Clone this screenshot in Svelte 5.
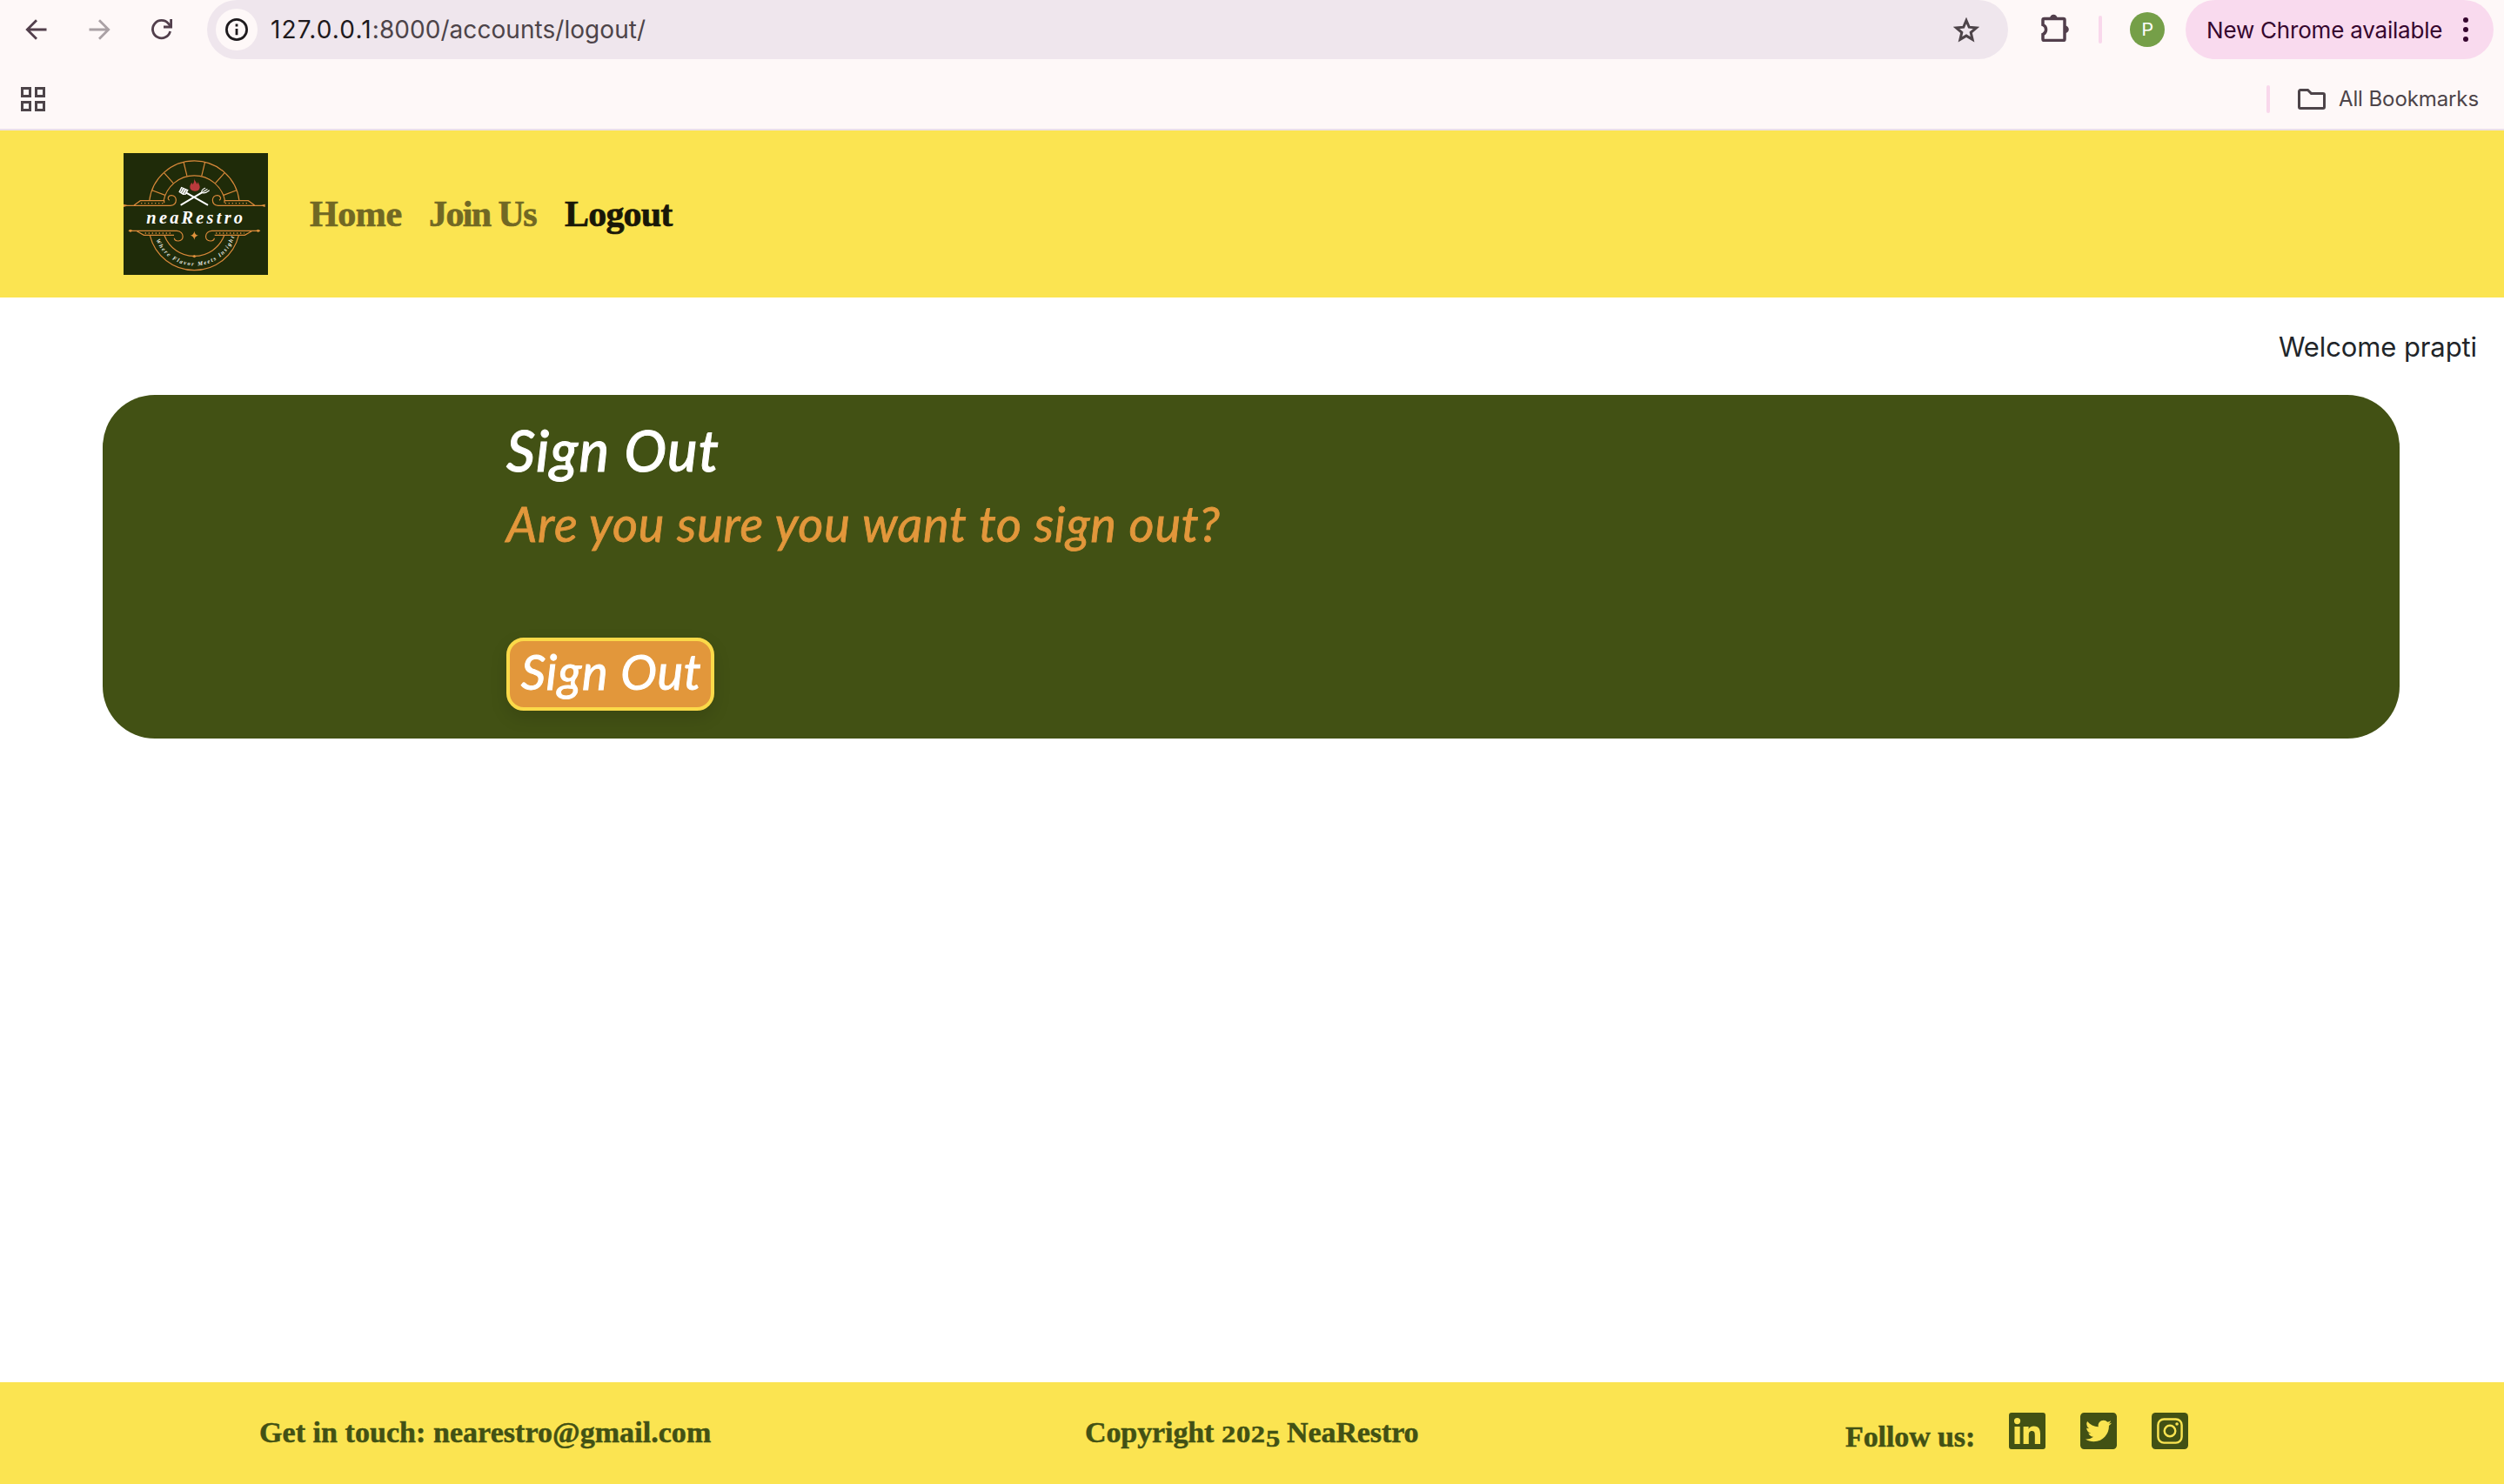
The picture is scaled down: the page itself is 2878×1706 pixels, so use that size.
<script>
  const links = [
    { label: 'Home', cls: 'home' },
    { label: 'Join Us', cls: 'join' },
    { label: 'Logout', cls: 'active' }
  ];
  // Angles of the bricks in the upper arch of the logo
  const bricks = [-69, -42, -13.5, 13.5, 42, 69].map((deg) => {
    const a = (deg * Math.PI) / 180;
    return {
      x1: 310 + 108 * Math.sin(a), y1: 232 - 108 * Math.cos(a),
      x2: 310 + 156 * Math.sin(a), y2: 232 - 156 * Math.cos(a)
    };
  });
</script>

<div class="page">
  <header class="chrome">
    <div class="toolbar">
      <svg class="nav-icon" viewBox="0 0 24 24"><path d="M23.500 12H1.500M12 1.200 1.300 12 12 22.800" /></svg>
      <svg class="nav-icon dim" viewBox="0 0 24 24"><path d="M.5 12h22M12 1.200 22.700 12 12 22.800" /></svg>
      <svg class="nav-icon" viewBox="0 0 24 24"><path d="M21.600 14A10.200 10.200 0 1 1 19.600 5.200L22.300 8.300" /><path d="M22.600 0V9H14" /></svg>
      <div class="omnibox">
        <span class="info">
          <svg viewBox="0 0 26 26"><circle cx="13" cy="13" r="11.600" /><path d="M13 12v7.300M13 6.400v3" /></svg>
        </span>
        <span class="url"><b>127.0.0.1</b>:8000/accounts/logout/</span>
        <svg class="star" viewBox="0 0 30 29"><path d="m15 3.500 3.200 7.700 8.300.7-6.300 5.400 1.900 8.100-7.100-4.300-7.100 4.300 1.900-8.100-6.300-5.400 8.300-.7z" /></svg>
      </div>
      <svg class="puzzle" viewBox="0 0 32 32">
        <path d="M4 5.500h21.500a1.500 1.500 0 0 1 1.500 1.500v22a1.500 1.500 0 0 1-1.500 1.500H3.500a1.500 1.500 0 0 1-1.500-1.500v-5.500a6 6 0 0 0 0-11V7a1.500 1.500 0 0 1 1.500-1.500z" />
        <path class="fill" d="M10 5a4.300 4.300 0 0 1 8.600 0zM27.500 13.500a4.300 4.300 0 0 1 0 8.600z" />
      </svg>
      <i class="sep"></i>
      <span class="avatar">P</span>
      <span class="update">
        New Chrome available
        <svg viewBox="0 0 6 28"><circle cx="3" cy="3" r="3" /><circle cx="3" cy="14" r="3" /><circle cx="3" cy="25" r="3" /></svg>
      </span>
    </div>
    <div class="bookmarks">
      <svg class="apps" viewBox="0 0 28 28"><path d="M1.500 1.500h9v9h-9zM17.500 1.500h9v9h-9zM1.500 17.500h9v9h-9zM17.500 17.500h9v9h-9z" /></svg>
      <span class="grow"></span>
      <i class="sep"></i>
      <svg class="folder" viewBox="0 0 32 24"><path d="M3 1.500h8.500l4 4H29a1.500 1.500 0 0 1 1.500 1.500v14a1.500 1.500 0 0 1-1.500 1.500H3A1.500 1.500 0 0 1 1.500 21V3A1.500 1.500 0 0 1 3 1.500z" /></svg>
      <span class="all">All Bookmarks</span>
    </div>
  </header>

  <nav class="navbar">
    <svg class="logo" viewBox="66 48 498 420">
      <rect class="bg" x="66" y="48" width="498" height="420" />
      <g class="gold">
        <path d="M155 213A156 156 0 0 1 465 213M204 213A108 108 0 0 1 416 213" />
        {#each bricks as b}<line x1={b.x1} y1={b.y1} x2={b.x2} y2={b.y2} />{/each}
        <path d="M157 332A157.500 157.500 0 0 0 463 332M207 332A110 110 0 0 0 413 332" />
        <path d="M68 229H228C254 226 252 193 230 194C219 195 216 206 224 211M102 228L124 212H206V220" />
        <path d="M552 229H392C366 226 368 193 390 194C401 195 404 206 396 211M518 228L496 212H414V220" />
        <path d="M84 316H250C276 318 277 352 254 351C245 350 241 347 241 341M112 317L136 331H240" />
        <path d="M536 316H370C344 318 343 352 366 351C375 350 379 347 379 341M508 317L484 331H380" />
        <path class="dots" d="M126 221H204M416 221H496M140 324H236M384 324H482" />
      </g>
      <path class="gold-fill" d="M66 224l16 5-16 5zM554 224l-16 5 16 5zM82 316l8-5 8 5-8 5zM522 316l8-5 8 5-8 5zM310 317q2 13 14 15q-12 2-14 15q-2-13-14-15q12-2 14-15zM302 404l8-5 8 5-8 5z" />
      <path class="flame" d="M309 134c1 9 8 12 10 21l4-7c2 7 7 13 6 19c-2 9-9 12-17 12c-9 0-17-5-17-13c-1-7 4-12 6-17l3 7c6-7 6-13 5-22z" />
      <g class="tools">
        <path d="M281 184L355 226M336 184L265 226" />
        <path class="thin" d="M336 185C333 176 340 172 347 169M338 185C348 187 354 183 361 177M341 181L354 173" />
        <path class="blade" d="M265 164L290 175L281 191L271 192L256 182z" />
        <path class="slits" d="M268 170l-5 11M275 173l-6 12M282 177l-6 11" />
      </g>
      <text class="brand" x="145" y="292" textLength="332">neaRestro</text>
      <path id="tag-arc" class="none" d="M175 340A144 144 0 0 0 447 340" />
      <text class="tag"><textPath href="#tag-arc" startOffset="8" textLength="350">Where Flavor Meets Insight</textPath></text>
    </svg>
    {#each links as l}<a class={l.cls} href="#top">{l.label}</a>{/each}
  </nav>

  <main>
    <p class="welcome">Welcome prapti</p>
    <section class="card">
      <h1>Sign Out</h1>
      <p>Are you sure you want to sign out?</p>
      <button>Sign Out</button>
    </section>
  </main>

  <footer>
    <span class="touch">Get in touch: nearestro@gmail.com</span>
    <span class="copy">Copyright <span class="old">202</span><span class="old low">5</span> NeaRestro</span>
    <div class="social">
      <span class="follow">Follow us:</span>
      <svg viewBox="0 0 448 448"><path fill-rule="evenodd" d="M416 0H32A32 32 0 0 0 0 32V416A32 32 0 0 0 32 448H416A32 32 0 0 0 448 416V32A32 32 0 0 0 416 0zM135 384H69V170H135zM102 141A38.500 38.500 0 1 1 102 64A38.500 38.500 0 0 1 102 141zM384 384H318V280C318 255 317 223 283 223C248 223 243 250 243 278V384H177V170H241V199H242C251 182 272 165 305 165C372 165 384 209 384 267z" /></svg>
      <svg viewBox="0 32 448 448"><path d="M400 32H48C21.500 32 0 53.500 0 80v352c0 26.500 21.500 48 48 48h352c26.500 0 48-21.500 48-48V80c0-26.500-21.500-48-48-48zm-48.900 158.800c.2 2.800.2 5.700.2 8.500 0 86.700-66 186.600-186.600 186.600-37.200 0-71.700-10.800-100.700-29.400 5.300.6 10.400.8 15.800.8 30.700 0 58.900-10.400 81.400-28-28.800-.6-53-19.500-61.300-45.500 10.100 1.500 19.200 1.500 29.600-1.200-30-6.100-52.500-32.500-52.500-64.400v-.8c8.700 4.900 18.900 7.900 29.600 8.300a65.447 65.447 0 0 1-29.200-54.600c0-12.200 3.200-23.400 8.900-33.100 32.300 39.800 80.800 65.800 135.200 68.600-9.300-44.500 24-80.600 64-80.600 18.900 0 35.900 7.900 47.900 20.700 14.800-2.800 29-8.300 41.600-15.800-4.900 15.200-15.200 28-28.800 36.100 13.200-1.400 26-5.100 37.800-10.200-8.900 13.100-20.100 24.700-32.900 34z" /></svg>
      <svg class="insta" viewBox="0 0 448 448"><rect width="448" height="448" rx="48" /><rect class="line" x="79" y="79" width="290" height="290" rx="72" /><circle class="line" cx="224" cy="224" r="67" /><circle class="dot" cx="310" cy="138" r="19" /></svg>
    </div>
  </footer>
</div>

<style>
  :global(body) { margin: 0; background: #fff; }
  .page { display: flex; flex-direction: column; width: 2878px; height: 1706px; overflow: hidden; font-family: Inter, sans-serif; }
  svg { display: block; flex: none; }
  .grow { flex: 1; }

  .chrome { box-sizing: border-box; height: 150px; background: #fef8f8; border-bottom: 2px solid #ebe0e8; }
  .toolbar { display: flex; align-items: center; height: 68px; padding-left: 30px; }
  .nav-icon { width: 24px; height: 24px; margin-right: 48px; fill: none; stroke: #523f4c; stroke-width: 2.800; overflow: visible; }
  .nav-icon.dim { stroke: #aaa1a5; }
  .nav-icon:nth-child(3) { margin-right: 40px; }
  .omnibox { display: flex; align-items: center; box-sizing: border-box; width: 2070px; height: 68px; padding: 0 33px 0 10px; border-radius: 34px; background: #efe6ed; }
  .info { display: grid; place-items: center; width: 48px; height: 48px; border-radius: 50%; background: #fef8f8; }
  .info svg { width: 26px; height: 26px; fill: none; stroke: #1e1a1d; stroke-width: 2.800; }
  .url { flex: 1; margin-left: 15px; font-size: 28px; letter-spacing: .05px; color: #4d4449; }
  .url b { font-weight: 400; letter-spacing: 1.150px; color: #1e1a1d; }
  .star { width: 30px; height: 29px; fill: none; stroke: #4d4449; stroke-width: 3; }
  .puzzle { width: 32px; height: 32px; margin: -4px 34px 0 38px; fill: none; stroke: #523f4c; stroke-width: 3.500; }
  .puzzle .fill { fill: #523f4c; stroke: none; }
  .sep { flex: none; width: 4px; height: 32px; border-radius: 2px; background: #f9d8ec; }
  .avatar { display: grid; place-items: center; width: 40px; height: 40px; margin: 0 24px 0 32px; border-radius: 50%; background: #759f48; color: #fff; font: 21px Roboto, sans-serif; }
  .update { display: flex; align-items: center; justify-content: space-between; box-sizing: border-box; width: 354px; height: 68px; padding: 0 29px 0 24px; border-radius: 34px; background: #f9daee; color: #36072f; font-size: 26px; letter-spacing: -.2px; white-space: nowrap; }
  .update svg { width: 6px; height: 28px; fill: #36072f; }
  .bookmarks { display: flex; align-items: center; box-sizing: border-box; height: 80px; padding: 12px 29px 0 24px; }
  .apps { width: 28px; height: 28px; fill: none; stroke: #4d4449; stroke-width: 3; }
  .folder { width: 32px; height: 24px; margin: 0 15px 0 32px; fill: none; stroke: #4d4449; stroke-width: 3; }
  .all { margin-top: -1px; font-size: 24px; letter-spacing: -.1px; color: #4d4449; }

  .navbar { display: flex; align-items: center; box-sizing: border-box; height: 192px; padding-left: 142px; background: #fbe451; }
  .logo { width: 166px; height: 140px; margin-right: 48px; }
  .navbar a { font: bold 42px/50px 'Liberation Serif', serif; text-decoration: none; color: #716824; -webkit-text-stroke: .7px; white-space: nowrap; }
  .home { width: 137px; letter-spacing: -.4px; }
  .join { width: 156px; letter-spacing: -1.600px; }
  .navbar .active { color: #191708; letter-spacing: -.8px; }

  .bg { fill: #1f2b09; }
  .gold { fill: none; stroke: #d9893a; stroke-width: 3.600; }
  .gold .dots { stroke-width: 4; stroke-dasharray: 4 8; }
  .gold-fill { fill: #e0923d; }
  .flame { fill: #b93a3c; }
  .tools { fill: none; stroke: #fff; stroke-width: 6; stroke-linecap: round; }
  .tools .thin { stroke-width: 3.500; }
  .tools .blade { fill: #fff; stroke: none; }
  .tools .slits { stroke: #1f2b09; stroke-width: 2; }
  .brand { font: italic bold 61px 'Liberation Serif', serif; fill: #fff; }
  .none { fill: none; }
  .tag { font: italic bold 20px 'Liberation Serif', serif; fill: #e9ebe4; }

  main { flex: 1; }
  .welcome { margin: 0; padding: 36px 31px 35px 0; text-align: right; font-size: 31px; line-height: 41px; letter-spacing: -.1px; color: #212529; }
  .card { box-sizing: border-box; width: 2640px; height: 395px; margin-left: 118px; padding: 23px 0 0 464px; border-radius: 60px; background: #425114; font-family: Lato, sans-serif; font-style: italic; }
  h1 { margin: 0; font-size: 65px; font-weight: 500; line-height: 80px; letter-spacing: 1.200px; color: #fff; -webkit-text-stroke: 1px; }
  .card p { margin: 10px 0 0; font-size: 56px; line-height: 70px; letter-spacing: .75px; color: #e2973b; -webkit-text-stroke: .8px; }
  button { display: block; box-sizing: border-box; width: 239px; height: 84px; margin-top: 96px; padding: 0 0 6px 2px; border: 4px solid #fbd949; border-radius: 20px; background: #e2973b; color: #fff; font: italic 56px/70px Lato, sans-serif; letter-spacing: .7px; -webkit-text-stroke: 1px; white-space: nowrap; box-shadow: 0 8px 20px rgba(0, 0, 0, .12); }

  footer { display: flex; align-items: flex-start; box-sizing: border-box; height: 117px; padding: 35px 0 0 298px; background: #fbe451; color: #425114; font: bold 34px/45px 'Liberation Serif', serif; -webkit-text-stroke: .5px; white-space: nowrap; }
  .touch { width: 949px; letter-spacing: .05px; }
  .copy { width: 874px; letter-spacing: -.1px; }
  /* Old-style figures: x-height digits, with the 5 hanging below the baseline */
  .old { display: inline-block; margin-right: 8.500px; font-size: 27px; line-height: 30px; letter-spacing: .6px; transform: scaleX(1.200); transform-origin: left; }
  .low { margin-right: 2px; transform: translateY(5px) scale(1.200, 1.050); }
  .social { display: flex; align-items: flex-start; }
  .follow { width: 188px; margin-top: 5px; letter-spacing: -.1px; }
  .social svg { width: 42px; height: 42px; margin-right: 40px; fill: #425114; }
  .insta .line { fill: none; stroke: #fbe451; stroke-width: 26; }
  .insta .dot { fill: #fbe451; }
</style>
